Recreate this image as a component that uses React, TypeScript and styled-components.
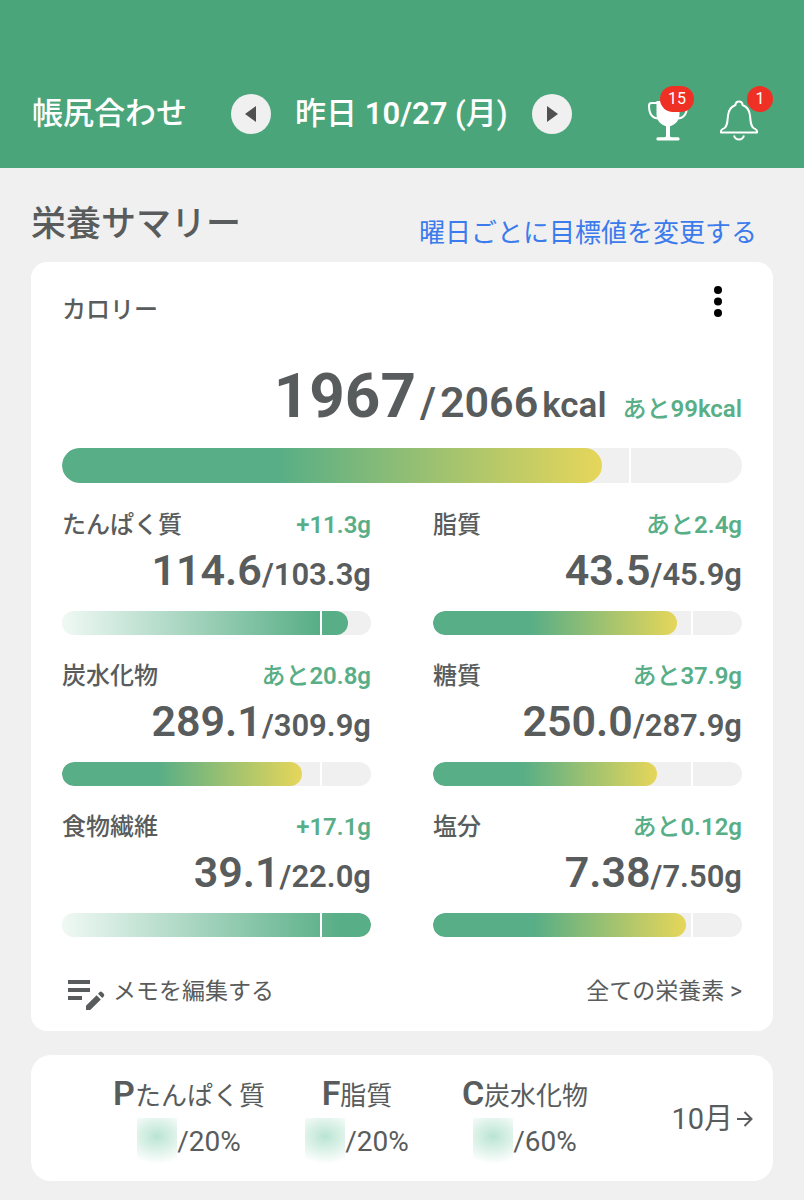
import React from "react";
import styled, { createGlobalStyle } from "styled-components";
import { MdEditNote } from "react-icons/md";

// the target marker sits at 5/6 of every bar
const TARGET_POSITION = 100 / 1.2;

const nutrients = [
  { name: "たんぱく質", value: "114.6", target: "103.3", prefix: "", diff: "+11.3g" },
  { name: "脂質", value: "43.5", target: "45.9", prefix: "あと", diff: "2.4g" },
  { name: "炭水化物", value: "289.1", target: "309.9", prefix: "あと", diff: "20.8g" },
  { name: "糖質", value: "250.0", target: "287.9", prefix: "あと", diff: "37.9g" },
  { name: "食物繊維", value: "39.1", target: "22.0", prefix: "", diff: "+17.1g" },
  { name: "塩分", value: "7.38", target: "7.50", prefix: "あと", diff: "0.12g" },
];

const balance = [
  { letter: "P", name: "たんぱく質", target: 20 },
  { letter: "F", name: "脂質", target: 20 },
  { letter: "C", name: "炭水化物", target: 60 },
];

const TrophyIcon = () => (
  <svg width="40" height="42" viewBox="0 0 40 42" fill="none" aria-hidden="true">
    <path d="M8.500 1h23v13c0 6.500-4 10.500-9.500 12.300v9.700c0 1 1 1.300 3 1.300h5a1.600 1.600 0 0 1 0 3.300H10a1.600 1.600 0 0 1 0-3.300h5c2 0 3-.3 3-1.300v-9.700C12.500 24.500 8.500 20.500 8.500 14z" fill="#fff" />
    <path d="M9 3H3.500C1.800 3 1 3.800 1 5.500 1 13 3 18.500 11 18.500M31 3h5.500C38.200 3 39 3.800 39 5.500c0 7.500-2 13-10 13" stroke="#fff" strokeWidth="2" />
  </svg>
);

const BellIcon = () => (
  <svg width="38" height="42" viewBox="0 0 38 42" fill="none" stroke="#fff" strokeWidth="2" strokeLinejoin="round" aria-hidden="true">
    <path d="M15.500 5c0-2.500 1.500-3.500 3.500-3.500s3.500 1 3.500 3.500c4.500 1.600 7 5.500 7.500 10.500.6 6.500.7 10.500 3.500 12.500 1.800 1 3.500 2 3.500 3v1.500H1V31c0-1 1.700-2 3.500-3 2.800-2 2.900-6 3.500-12.500.5-5 3-8.900 7.500-10.500z" />
    <path d="M14 35.500c.8 2.700 2.500 4 5 4s4.200-1.300 5-4" />
  </svg>
);

const MoreIcon = () => (
  <svg width="8" height="32" viewBox="0 0 8 32" aria-hidden="true">
    <circle cx="4" cy="4" r="4" />
    <circle cx="4" cy="15.500" r="4" />
    <circle cx="4" cy="27" r="4" />
  </svg>
);

const ArrowIcon = () => (
  <svg width="16" height="16" viewBox="0 0 16 16" fill="none" stroke="currentColor" strokeWidth="2" aria-hidden="true">
    <path d="M0 8h14.500M7.500 1l7 7-7 7" />
  </svg>
);

interface BarProps {
  label: string;
  value: number;
  target: number;
  large?: boolean;
}

const ProgressBar: React.FC<BarProps> = ({ label, value, target, large }) => {
  const percent = Math.min((value / target) * TARGET_POSITION, 100);
  return (
    <Track $large={large} role="progressbar" aria-label={label} aria-valuenow={value} aria-valuemin={0} aria-valuemax={target}>
      <Fill $over={value > target} style={{ width: `${percent}%` }} />
      <Marker />
    </Track>
  );
};

const App: React.FC = () => {
  return (
    <>
      <GlobalStyle />
      <Header>
        <AppTitle>帳尻合わせ</AppTitle>
        <DateNav aria-label="日付">
          <RoundButton type="button" aria-label="前の日">
            <svg width="12" height="16" viewBox="0 0 12 16" fill="#505050"><path d="M11 0v16L0 8z" /></svg>
          </RoundButton>
          <DateText>昨日 <b>10/27</b> (月)</DateText>
          <RoundButton type="button" aria-label="次の日">
            <svg width="12" height="16" viewBox="0 0 12 16" fill="#505050"><path d="M1 0v16l11-8z" /></svg>
          </RoundButton>
        </DateNav>
        <HeaderActions>
          <IconButton type="button" aria-label="トロフィー">
            <TrophyIcon />
            <Badge>15</Badge>
          </IconButton>
          <IconButton type="button" aria-label="お知らせ">
            <BellIcon />
            <Badge>1</Badge>
          </IconButton>
        </HeaderActions>
      </Header>

      <Main>
        <SectionHead>
          <SectionTitle>栄養サマリー</SectionTitle>
          <TargetLink href="#targets">曜日ごとに目標値を変更する</TargetLink>
        </SectionHead>

        <SummaryCard>
          <CardHead>
            <Label>カロリー</Label>
            <MoreButton type="button" aria-label="メニュー">
              <MoreIcon />
            </MoreButton>
          </CardHead>
          <CalorieRow>
            <CalorieValue>1967</CalorieValue>
            <Slash>/</Slash>
            <CalorieTarget>2066</CalorieTarget>
            <Unit>kcal</Unit>
            <Diff>あと<b>99kcal</b></Diff>
          </CalorieRow>
          <ProgressBar label="カロリー" value={1967} target={2066} large />

          <NutrientGrid>
            {nutrients.map((n) => (
              <Nutrient key={n.name}>
                <NutrientHead>
                  <Label>{n.name}</Label>
                  <Diff>{n.prefix}<b>{n.diff}</b></Diff>
                </NutrientHead>
                <Amount>
                  <strong>{n.value}</strong>/{n.target}g
                </Amount>
                <ProgressBar label={n.name} value={Number(n.value)} target={Number(n.target)} />
              </Nutrient>
            ))}
          </NutrientGrid>

          <CardFoot>
            <MemoButton type="button">
              <MdEditNote size={48} />
              メモを編集する
            </MemoButton>
            <AllLink href="#nutrients">全ての栄養素 &gt;</AllLink>
          </CardFoot>
        </SummaryCard>

        <BalanceCard>
          <BalanceList>
            {balance.map((b) => (
              <BalanceItem key={b.letter}>
                <BalanceName>
                  <b>{b.letter}</b>
                  {b.name}
                </BalanceName>
                <BalanceValue>
                  <HiddenValue />/{b.target}%
                </BalanceValue>
              </BalanceItem>
            ))}
          </BalanceList>
          <MonthLink href="#month">
            10月
            <ArrowIcon />
          </MonthLink>
        </BalanceCard>
      </Main>
    </>
  );
};

const GlobalStyle = createGlobalStyle`
  * {
    box-sizing: border-box;
  }

  body {
    margin: 0;
    background: #f0f0f0;
    color: #595c5c;
    font-family: Roboto, "Noto Sans CJK JP", sans-serif;
  }

  button {
    padding: 0;
    border: none;
    background: none;
    color: inherit;
    font: inherit;
    cursor: pointer;
  }

  a {
    text-decoration: none;
  }

  b {
    font-weight: 600;
  }

  svg {
    display: block;
    flex-shrink: 0;
  }
`;

const Header = styled.header`
  display: flex;
  align-items: center;
  padding: 86px 46px 26px 32px;
  background: #4ba57a;
  color: #fff;
  line-height: 52px;
  white-space: nowrap;
`;

const AppTitle = styled.h1`
  margin: 0;
  font-size: 31px;
  font-weight: 500;
`;

const DateNav = styled.nav`
  display: flex;
  align-items: center;
  gap: 24px;
  margin-left: 44px;
`;

const DateText = styled.span`
  font-size: 31px;
  font-weight: 500;
`;

const RoundButton = styled.button`
  display: flex;
  align-items: center;
  justify-content: center;
  width: 40px;
  height: 40px;
  border-radius: 50%;
  background: #f0f0f0;
`;

const HeaderActions = styled.div`
  display: flex;
  gap: 32px;
  margin-left: auto;
  padding-top: 14px;
`;

const IconButton = styled.button`
  position: relative;
`;

const Badge = styled.span`
  position: absolute;
  top: -14px;
  left: calc(100% - 28px);
  min-width: 26px;
  height: 26px;
  padding: 0 8px;
  border-radius: 13px;
  background: #ee3124;
  font-size: 16px;
  line-height: 26px;

  ${IconButton}:last-child & {
    left: calc(100% - 11px);
  }
`;

const Main = styled.main`
  padding: 28px 31px 20px;
`;

const SectionHead = styled.div`
  display: flex;
  align-items: flex-end;
  justify-content: space-between;
  height: 56px;
  margin-bottom: 10px;
`;

const SectionTitle = styled.h2`
  margin: 0;
  font-size: 35px;
  font-weight: 500;
  line-height: 54px;
`;

const TargetLink = styled.a`
  padding-right: 16px;
  color: #3b7bec;
  font-size: 26px;
  line-height: 38px;
`;

const Card = styled.section`
  border-radius: 16px;
  background: #fff;
`;

const SummaryCard = styled(Card)`
  padding: 24px 31px 15px;
`;

const CardHead = styled.div`
  display: flex;
  justify-content: space-between;
  height: 48px;
  line-height: 48px;
`;

const MoreButton = styled.button`
  display: flex;
  align-items: flex-start;
  padding: 0 20px 0 16px;
  color: #000;
`;

const Label = styled.span`
  font-size: 24px;
  font-weight: 500;
`;

const Diff = styled.span`
  color: #58ae86;
  font-size: 24px;
  font-weight: 500;
`;

const CalorieRow = styled.div`
  display: flex;
  align-items: baseline;
  justify-content: flex-end;
  margin: 30px 0 7px;
  font-weight: 600;
  line-height: 64px;

  ${Diff} {
    margin-left: 16px;
  }
`;

const CalorieValue = styled.strong`
  font-size: 62px;
  font-weight: 700;
`;

const Slash = styled.span`
  margin: 0 4px;
  font-size: 42px;
`;

const CalorieTarget = styled.span`
  font-size: 43px;
`;

const Unit = styled.span`
  margin-left: 4px;
  font-size: 35px;
`;

const Track = styled.div<{ $large?: boolean }>`
  position: relative;
  height: ${({ $large }) => ($large ? "35px" : "24px")};
  border-radius: 18px;
  background: #f0f0f0;
  overflow: hidden;
`;

const Fill = styled.div<{ $over: boolean }>`
  height: 100%;
  border-radius: 18px;
  background: ${({ $over }) =>
    $over
      ? "linear-gradient(to right, #f0f9f5, #58ae86 90%)"
      : "linear-gradient(to right, #58ae86 40%, #e6d65a)"};
`;

const Marker = styled.div`
  position: absolute;
  top: 0;
  bottom: 0;
  left: ${TARGET_POSITION}%;
  width: 2px;
  background: #fff;
`;

const NutrientGrid = styled.div`
  display: grid;
  grid-template-columns: 1fr 1fr;
  gap: 21px 62px;
  margin-top: 22px;
`;

const Nutrient = styled.div`
  display: flex;
  flex-direction: column;
`;

const NutrientHead = styled.div`
  display: flex;
  justify-content: space-between;
  line-height: 40px;
`;

const Amount = styled.div`
  margin-bottom: 11px;
  font-size: 31px;
  font-weight: 600;
  line-height: 50px;
  text-align: right;

  strong {
    font-size: 43px;
    font-weight: 600;
  }
`;

const CardFoot = styled.div`
  display: flex;
  align-items: center;
  justify-content: space-between;
  margin-top: 31px;
  font-size: 23px;
  line-height: 48px;
`;

const MemoButton = styled.button`
  display: flex;
  align-items: center;
  gap: 3px;
`;

const AllLink = styled.a`
  color: inherit;
`;

const BalanceCard = styled(Card)`
  display: flex;
  align-items: center;
  justify-content: space-between;
  margin-top: 24px;
  padding: 17px 20px 15px 74px;
  border-radius: 20px;
`;

const BalanceList = styled.div`
  display: grid;
  grid-template-columns: repeat(3, 1fr);
  flex: 1;
  max-width: 504px;
`;

const BalanceItem = styled.div`
  display: flex;
  flex-direction: column;
  align-items: center;
`;

const BalanceName = styled.div`
  font-size: 26px;
  line-height: 43px;
  white-space: nowrap;

  b {
    font-size: 34px;
  }
`;

const BalanceValue = styled.div`
  display: flex;
  align-items: center;
  font-size: 28px;
  line-height: 48px;
`;

const HiddenValue = styled.span`
  width: 40px;
  height: 48px;
  background: radial-gradient(ellipse 36px 28px at 50% 38%, #b9e4d2, #fff);
`;

const MonthLink = styled.a`
  display: flex;
  align-items: center;
  gap: 4px;
  color: inherit;
  font-size: 29px;
  line-height: 40px;
`;

export default App;
